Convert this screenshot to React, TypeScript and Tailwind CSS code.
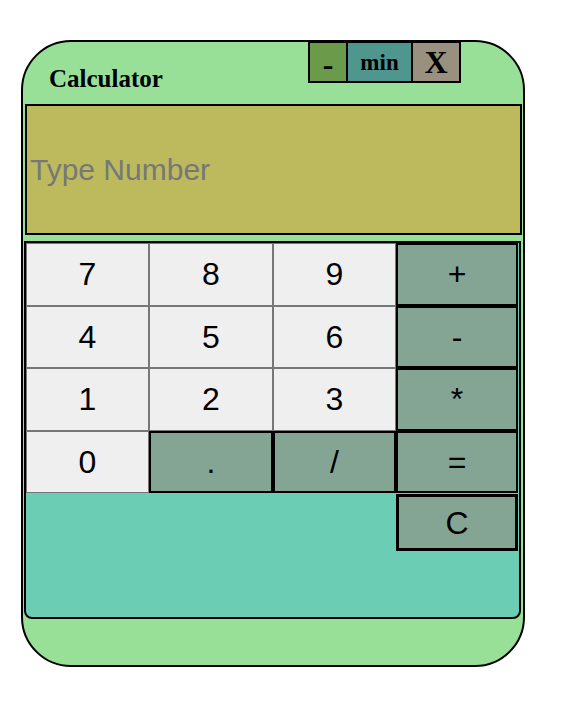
import React, { useState } from "react"

const keys = [
  { label: "7", op: false },
  { label: "8", op: false },
  { label: "9", op: false },
  { label: "+", op: true },
  { label: "4", op: false },
  { label: "5", op: false },
  { label: "6", op: false },
  { label: "-", op: true },
  { label: "1", op: false },
  { label: "2", op: false },
  { label: "3", op: false },
  { label: "*", op: true },
  { label: "0", op: false },
  { label: ".", op: true },
  { label: "/", op: true },
  { label: "=", op: true },
]

const App = () => {
  const [value, setValue] = useState("")

  const press = (k: string) => {
    if (k === "=") {
      try {
        // eslint-disable-next-line no-new-func
        setValue(String(Function(`return (${value})`)()))
      } catch {
        setValue("Error")
      }
      return
    }
    setValue(value + k)
  }

  return (
    <div className="pt-[40px] pl-[21px] font-['Liberation_Sans',Arial,sans-serif]">
      <div className="w-[504px] h-[627px] border-2 border-black rounded-[50px] bg-[#98e098] px-[1px] flex flex-col">
        <div className="h-[62px] flex items-start justify-between">
          <h1 className="ml-[25px] mt-[22px] text-[25px] leading-[30px] font-bold font-['Liberation_Serif','Times_New_Roman',serif] text-black">
            Calculator
          </h1>
          <div className="flex -mt-[1px] mr-[61px] font-['Liberation_Serif','Times_New_Roman',serif] font-bold text-black">
            <button className="w-[40px] h-[42px] border-2 border-black bg-[#6a9a4a] text-[32px] leading-none pt-[3px]">
              -
            </button>
            <button className="w-[65px] h-[42px] border-2 border-l-0 border-black bg-[#4f968e] text-[23px] leading-none">
              min
            </button>
            <button className="w-[48px] h-[42px] border-2 border-l-0 border-black bg-[#9a9080] text-[32px] leading-none">
              X
            </button>
          </div>
        </div>
        <input
          value={value}
          onChange={(e) => setValue(e.target.value)}
          placeholder="Type Number"
          className="ml-[1px] w-[497px] h-[131px] border-2 border-black bg-[#bdb95d] px-[3px] text-[30px] text-black placeholder:text-[#777] outline-none"
        />
        <div className="mt-[6px] w-[497px] h-[378px] border-2 border-black rounded-b-[8px] bg-[#6bcdb4] pr-[1px]">
          <div className="grid grid-cols-[123px_124px_123px_122px]">
            {keys.map((k) => (
              <button
                key={k.label}
                onClick={() => press(k.label)}
                className={`h-[62.5px] text-[32px] text-black leading-none ${
                  k.op ? "bg-[#84a594] border-2 border-black" : "bg-[#efefef] border border-[#777]"
                }`}
              >
                {k.label}
              </button>
            ))}
          </div>
          <div className="flex justify-end">
            <button
              onClick={() => setValue("")}
              className="w-[122px] h-[57px] mt-[1px] border-[3px] border-black bg-[#84a594] text-[32px] text-black leading-none"
            >
              C
            </button>
          </div>
        </div>
      </div>
    </div>
  )
}

export default App
